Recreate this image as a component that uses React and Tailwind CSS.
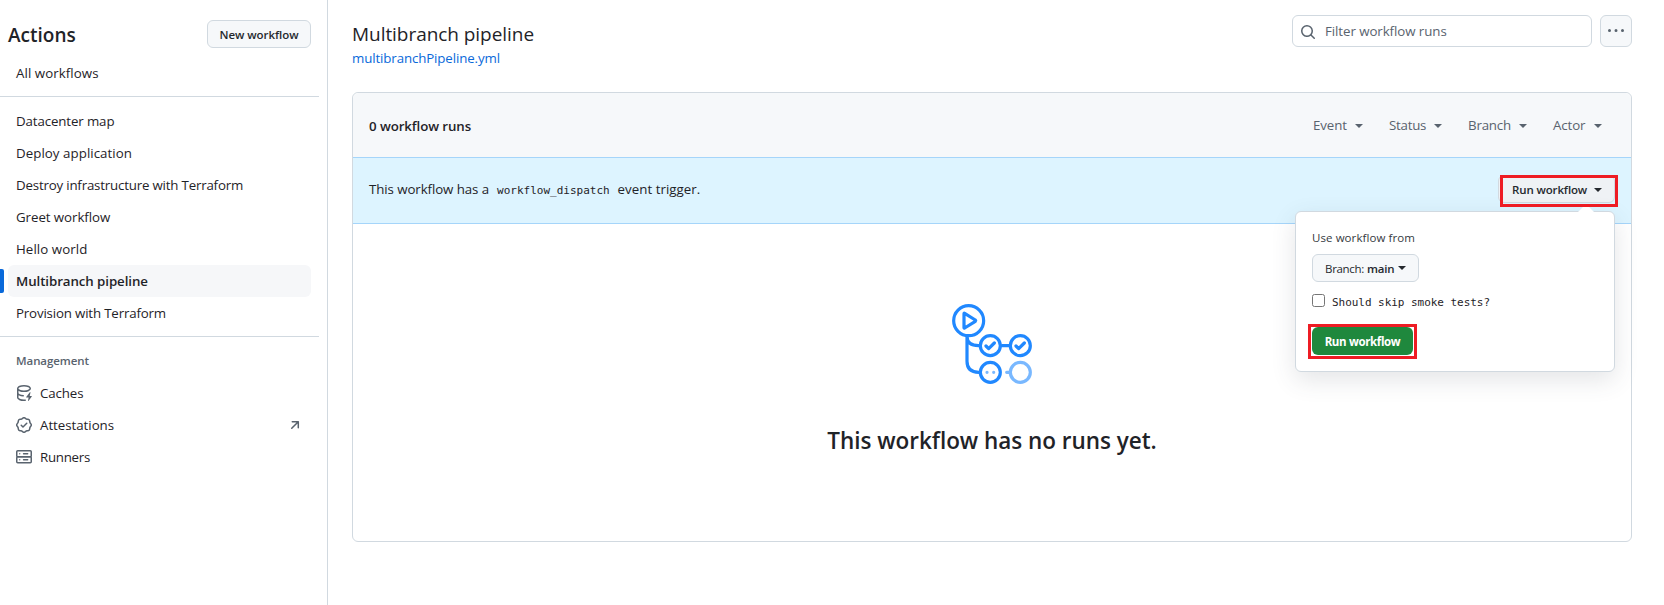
const CACHE =
  "M2.5 5.724V8c0 .248.238.7 1.169 1.159.874.43 2.144.745 3.62.822a.75.75 0 1 1-.078 1.498c-1.622-.085-3.102-.432-4.204-.975a5.565 5.565 0 0 1-.507-.28V12.5c0 .133.058.318.282.551.227.237.591.483 1.101.707 1.015.447 2.47.742 4.117.742.406 0 .802-.018 1.183-.052a.751.751 0 1 1 .134 1.494C8.89 15.98 8.45 16 8 16c-1.805 0-3.475-.32-4.721-.869-.623-.274-1.173-.619-1.579-1.041-.408-.425-.7-.964-.7-1.59v-9c0-.626.292-1.165.7-1.591.406-.42.956-.766 1.579-1.04C4.525.32 6.195 0 8 0c1.806 0 3.476.32 4.721.869.623.274 1.173.619 1.579 1.041.408.425.7.964.7 1.59 0 .626-.292 1.165-.7 1.591-.406.42-.956.766-1.578 1.04C11.475 6.68 9.805 7 8 7c-1.805 0-3.475-.32-4.721-.869a6.15 6.15 0 0 1-.779-.407Zm0-2.224c0 .133.058.318.282.551.227.237.591.483 1.101.707C4.898 5.205 6.353 5.5 8 5.5c1.646 0 3.101-.295 4.118-.742.508-.224.873-.471 1.1-.708.224-.232.282-.417.282-.55 0-.133-.058-.318-.282-.551-.227-.237-.591-.483-1.101-.707C11.102 1.795 9.647 1.5 8 1.5c-1.646 0-3.101.295-4.118.742-.508.224-.873.471-1.1.708-.224.232-.282.417-.282.55Z M14.49 7.582a.375.375 0 0 0-.66-.313l-3.625 4.625a.375.375 0 0 0 .295.606h2.127l-.619 2.922a.375.375 0 0 0 .666.304l3.125-4.125A.375.375 0 0 0 15.5 11h-1.778l.769-3.418Z";
const VERIFIED =
  "m9.585.52.929.68c.153.112.331.186.518.215l1.138.175a2.678 2.678 0 0 1 2.24 2.24l.174 1.139c.029.187.103.365.215.518l.68.928a2.677 2.677 0 0 1 0 3.17l-.68.928a1.174 1.174 0 0 0-.215.518l-.175 1.138a2.678 2.678 0 0 1-2.241 2.241l-1.138.175a1.17 1.17 0 0 0-.518.215l-.928.68a2.677 2.677 0 0 1-3.17 0l-.928-.68a1.174 1.174 0 0 0-.518-.215L3.83 14.41a2.678 2.678 0 0 1-2.24-2.24l-.175-1.138a1.17 1.17 0 0 0-.215-.518l-.68-.928a2.677 2.677 0 0 1 0-3.17l.68-.928c.112-.153.186-.331.215-.518l.175-1.14a2.678 2.678 0 0 1 2.24-2.24l1.139-.175c.187-.029.365-.103.518-.215l.928-.68a2.677 2.677 0 0 1 3.17 0ZM7.303 1.728l-.927.68a2.67 2.67 0 0 1-1.18.489l-1.137.174a1.179 1.179 0 0 0-.987.987l-.174 1.136a2.677 2.677 0 0 1-.489 1.18l-.68.928a1.18 1.18 0 0 0 0 1.394l.68.927c.256.348.424.753.489 1.18l.174 1.137c.078.509.478.909.987.987l1.136.174a2.67 2.67 0 0 1 1.18.489l.928.68c.414.305.979.305 1.394 0l.927-.68a2.67 2.67 0 0 1 1.18-.489l1.137-.174a1.18 1.18 0 0 0 .987-.987l.174-1.136a2.67 2.67 0 0 1 .489-1.18l.68-.928a1.176 1.176 0 0 0 0-1.394l-.68-.927a2.686 2.686 0 0 1-.489-1.18l-.174-1.137a1.179 1.179 0 0 0-.987-.987l-1.136-.174a2.677 2.677 0 0 1-1.18-.489l-.928-.68a1.176 1.176 0 0 0-1.394 0ZM11.28 6.78l-3.75 3.75a.75.75 0 0 1-1.06 0L4.72 8.78a.751.751 0 0 1 .018-1.042.751.751 0 0 1 1.042-.018L7 8.94l3.22-3.22a.751.751 0 0 1 1.042.018.751.751 0 0 1 .018 1.042Z";
const ARROW =
  "M4.53 4.75A.75.75 0 0 1 5.28 4h6.01a.75.75 0 0 1 .75.75v6.01a.75.75 0 0 1-1.5 0v-4.2l-5.26 5.261a.749.749 0 0 1-1.275-.326.749.749 0 0 1 .215-.734L9.48 5.5h-4.2a.75.75 0 0 1-.75-.75Z";
const SEARCH =
  "M10.68 11.74a6 6 0 0 1-7.922-8.982 6 6 0 0 1 8.982 7.922l3.04 3.04a.749.749 0 0 1-.326 1.275.749.749 0 0 1-.734-.215ZM11.5 7a4.499 4.499 0 1 0-8.997 0A4.499 4.499 0 0 0 11.5 7Z";
const KEBAB =
  "M8 9a1.5 1.5 0 1 0 0-3 1.5 1.5 0 0 0 0 3ZM1.5 9a1.5 1.5 0 1 0 0-3 1.5 1.5 0 0 0 0 3Zm13 0a1.5 1.5 0 1 0 0-3 1.5 1.5 0 0 0 0 3Z";

function Icon({ d, className = "" }) {
  return (
    <svg viewBox="0 0 16 16" className={`size-4 shrink-0 fill-[#59636e] ${className}`}>
      <path d={d} />
    </svg>
  );
}

function ServerIcon() {
  return (
    <svg viewBox="0 0 16 16" className="size-4 shrink-0" fill="none" stroke="#59636e" strokeWidth="1.5" strokeLinecap="round">
      <rect x=".75" y="1.75" width="14.5" height="6" rx="1" />
      <rect x=".75" y="7.75" width="14.5" height="6" rx="1" />
      <path strokeWidth="1.3" d="M3.75 4.75h.01M7.5 4.75h4.25M3.75 10.75h.01M7.5 10.75h4.25" />
    </svg>
  );
}

function Caret({ className = "" }) {
  return <span className={`inline-block border-x-4 border-t-4 border-x-transparent border-t-current ${className}`} />;
}

const WORKFLOWS = [
  ["Datacenter map", "tracking-[-0.12px]"],
  ["Deploy application", "tracking-[0.05px]"],
  ["Destroy infrastructure with Terraform", "tracking-[-0.19px]"],
  ["Greet workflow", "tracking-[-0.06px]"],
  ["Hello world", "tracking-[0.06px]"],
  ["Multibranch pipeline", "tracking-[-0.08px]"],
  ["Provision with Terraform", "tracking-[-0.17px]"],
];

const FILTERS = [
  ["Event", "w-[76px]", "w-[34px] tracking-[-0.1px]"],
  ["Status", "w-[79px]", "w-[37px] tracking-[-0.25px]"],
  ["Branch", "w-[85px]", "w-[43px] tracking-[-0.19px]"],
  ["Actor", "w-[62px]", "w-[33px] tracking-[-0.1px]"],
];

function Sidebar() {
  return (
    <aside className="h-[605px] w-[328px] shrink-0 border-r border-[#d1d9e0]">
      <div className="flex h-[57px] items-start justify-between pr-4 pl-2 pt-5">
        <h2 className="pt-[3px] text-[19px] leading-6 font-semibold">Actions</h2>
        <button className="h-7 w-[104px] rounded-md border border-[#d1d9e0] bg-[#f6f8fa] text-[11.5px] leading-[27px] font-semibold tracking-[-0.05px] text-[#25292e]">
          New workflow
        </button>
      </div>
      <div className="flex h-8 items-center pl-4 tracking-[0.06px]">All workflows</div>
      <div className="mt-[7px] mr-2 border-t border-[#d1d9e0]" />
      <ul className="mt-2">
        {WORKFLOWS.map(([name, tracking]) => {
          const active = name === "Multibranch pipeline";
          return (
            <li key={name} className="flex h-8 items-center">
              <span className={active ? "h-6 w-1 rounded-r-xs bg-[#0969da]" : "w-1"} />
              <span
                className={`ml-1 flex h-8 w-[303px] items-center rounded-md pl-2 ${tracking} ${active ? "bg-[#f6f7f9] font-semibold" : ""}`}
              >
                {name}
              </span>
            </li>
          );
        })}
      </ul>
      <div className="mt-[7px] mr-2 border-t border-[#d1d9e0]" />
      <h3 className="mt-[15px] h-[18px] pl-4 text-[11.5px] leading-[18px] font-semibold tracking-[-0.07px] text-[#59636e]">Management</h3>
      <ul className="mt-[7px] pl-4">
        <li className="flex h-8 items-center gap-2 tracking-[-0.12px]">
          <Icon d={CACHE} />
          Caches
        </li>
        <li className="flex h-8 items-center gap-2 pr-6 tracking-[-0.03px]">
          <Icon d={VERIFIED} />
          <span className="grow">Attestations</span>
          <Icon d={ARROW} />
        </li>
        <li className="flex h-8 items-center gap-2 tracking-[-0.27px]">
          <ServerIcon />
          Runners
        </li>
      </ul>
    </aside>
  );
}

function Illustration() {
  return (
    <svg viewBox="0 0 240 240" className="size-20" fill="none" stroke="#2088ff" strokeWidth="9.6" strokeLinecap="round" strokeLinejoin="round">
      <circle cx="50" cy="50" r="45" />
      <path d="M36 29v42q0 2 2 1l32-20q2-2 0-4L38 28q-2-1-2 1Z" />
      <path d="M45 97v75q0 33 35 33M45 97q0 28 35 28M150 125h20" />
      <circle cx="115" cy="125" r="30" />
      <circle cx="205" cy="125" r="30" />
      <circle cx="115" cy="205" r="30" />
      <path d="m102 126 8 8 17-17M192 126l8 8 17-17" />
      <g stroke="#79b8ff">
        <circle cx="205" cy="205" r="30" />
        <path d="M164 205h8M105 205h.1M125 205h.1" />
      </g>
    </svg>
  );
}

function DispatchMenu() {
  return (
    <div className="absolute top-[53px] right-4 h-[161px] w-80 rounded-md border border-[#d1d9e0] bg-white px-4 pt-4 shadow-[0_8px_24px_rgba(66,74,83,0.14)]">
      <svg viewBox="0 0 16 9" className="absolute -top-2 right-5 h-[9px] w-4">
        <path d="M0 9V8l8-8 8 8v1Z" fill="#fff" />
      </svg>
      <p className="h-5 text-[11.5px] leading-5 font-medium tracking-[0.08px] text-[#353a41]">Use workflow from</p>
      <button className="mt-[6px] flex h-7 w-[107px] items-center rounded-md border border-[#d1d9e0] bg-[#f6f8fa] pl-3 text-[11.5px] text-[#25292e]">
        <span className="w-[42px] pt-0.5 text-left tracking-[-0.3px]">Branch:</span>
        <b className="w-[27px] pt-0.5 text-left font-semibold tracking-[-0.2px]">main</b>
        <Caret className="mb-px ml-1" />
      </button>
      <label className="mt-[11px] flex h-[15px] items-start">
        <span className="mt-px size-[13px] rounded-[2.5px] border border-[#767676] bg-white" />
        <span className="ml-[7px] pt-[3px] font-['DejaVu_Sans_Mono',monospace] text-[11px] leading-[14px] tracking-[-0.04px] whitespace-nowrap">
          Should skip smoke tests?
        </span>
      </label>
      <button className="mt-[19px] h-7 w-[101px] rounded-md bg-[#1f883d] text-[11.5px] leading-[29px] font-bold tracking-[-0.35px] text-white">
        Run workflow
      </button>
      <span className="absolute top-[112px] left-3 h-[35px] w-[109px] border-3 border-[#ee1c24]" />
    </div>
  );
}

function RunsTable() {
  return (
    <section className="mt-[26px] h-[450px] rounded-md border border-[#d1d9e0]">
      <header className="flex h-16 items-center rounded-t-md bg-[#f6f8fa] pl-4">
        <span className="grow pt-0.5 font-semibold tracking-[-0.09px]">0 workflow runs</span>
        <div className="flex pr-4 text-[#59636e]">
          {FILTERS.map(([name, cell, label]) => (
            <span key={name} className={`flex items-center ${cell}`}>
              <span className={`whitespace-nowrap ${label}`}>{name}</span>
              <Caret className="mt-0.5 ml-2" />
            </span>
          ))}
        </div>
      </header>
      <div className="relative flex h-[67px] items-center border-y border-[#a5d5fa] bg-[#ddf4ff] pl-4">
        <span className="w-[128px] pb-[3px] whitespace-nowrap tracking-[-0.09px]">This workflow has a</span>
        <code className="w-[120.5px] font-['DejaVu_Sans_Mono',monospace] text-[11px] tracking-[0.01px]">workflow_dispatch</code>
        <span className="grow pb-[3px] tracking-[0.04px]">event trigger.</span>
        <button className="mr-4 mb-[3px] flex h-7 w-[117px] items-center rounded-md border border-[#d1d9e0] bg-[#eff2f5] pl-[13px] text-[11.5px] font-semibold tracking-[-0.13px] text-[#25292e]">
          <span className="w-[74px] pt-px whitespace-nowrap text-left">Run workflow</span>
          <Caret className="mt-0.5 ml-2" />
        </button>
        <DispatchMenu />
        <span className="absolute top-[17px] right-[13px] h-8 w-[118px] border-3 border-[#ee1c24]" />
      </div>
      <div className="flex flex-col items-center pt-20">
        <Illustration />
        <h3 className="mt-[39px] text-[22.5px] leading-9 font-semibold tracking-[-0.03px]">This workflow has no runs yet.</h3>
      </div>
    </section>
  );
}

export default function App() {
  return (
    <div className="flex h-[605px] overflow-hidden bg-white font-['Open_Sans',sans-serif] text-[13.3px] leading-5 text-[#1f2328]">
      <Sidebar />
      <main className="ml-6 w-[1280px]">
        <div className="flex h-[66px] items-start">
          <div className="grow pt-[22px]">
            <h1 className="text-[19px] leading-6 tracking-[-0.05px]">Multibranch pipeline</h1>
            <a className="block pt-0.5 tracking-[-0.12px] text-[#0969da]">multibranchPipeline.yml</a>
          </div>
          <div className="flex gap-2 pt-[15px]">
            <div className="flex h-8 w-[300px] items-center rounded-md border border-[#d1d9e0] pl-[7px] text-[#59636e]">
              <Icon d={SEARCH} className="mt-px" />
              <span className="ml-[9px] tracking-[-0.07px]">Filter workflow runs</span>
            </div>
            <button className="flex size-8 items-center justify-center rounded-md border border-[#d1d9e0] bg-[#f6f8fa]">
              <Icon d={KEBAB} />
            </button>
          </div>
        </div>
        <RunsTable />
      </main>
    </div>
  );
}
